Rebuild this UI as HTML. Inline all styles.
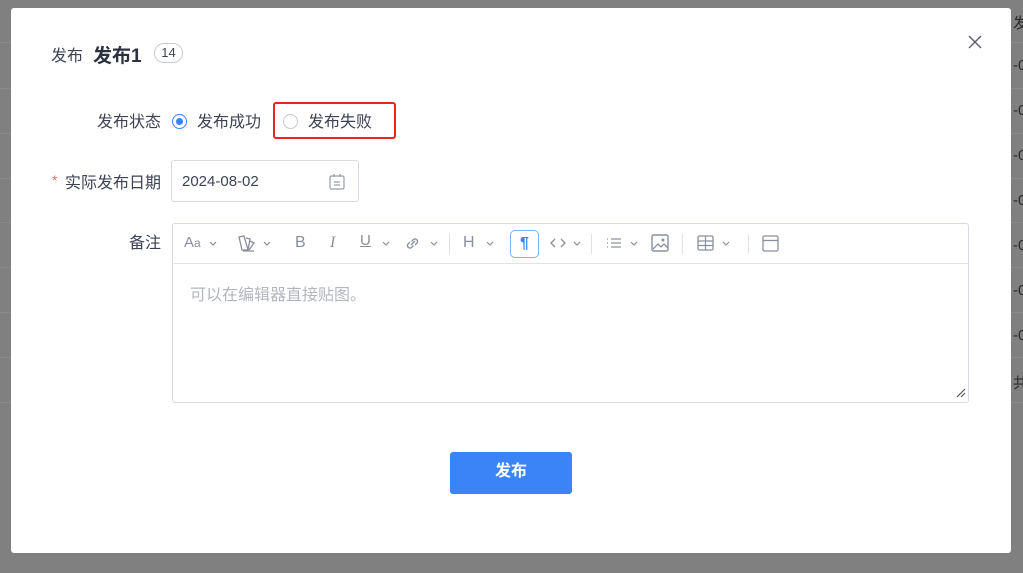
<!DOCTYPE html>
<html><head><meta charset="utf-8"><style>
*{margin:0;padding:0;box-sizing:border-box}
body{width:1023px;height:573px;overflow:hidden;background:#808080;font-family:"Liberation Sans","Noto Sans CJK SC",sans-serif;position:relative;color:#333}
.row{position:absolute;left:0;right:0;height:1px;background:#8a8a8a}
.rt{position:absolute;left:1013px;font-size:15px;color:#2a2a2a;white-space:nowrap}
.modal{position:absolute;left:11px;top:8px;width:1000px;height:545px;background:#fff;border-radius:3px}
.abs{position:absolute;white-space:nowrap}
.lbl{font-size:16px;color:#3d4353}
svg{display:block}
</style></head><body>
<div class="row" style="top:42px"></div><div class="row" style="top:88px"></div><div class="row" style="top:133px"></div><div class="row" style="top:178px"></div><div class="row" style="top:222px"></div><div class="row" style="top:267px"></div><div class="row" style="top:312px"></div><div class="row" style="top:357px"></div><div class="row" style="top:402px"></div>
<div class="rt" style="top:12px">发布</div>
<div class="rt" style="top:57px">-0</div><div class="rt" style="top:102px">-0</div><div class="rt" style="top:147px">-0</div><div class="rt" style="top:192px">-0</div><div class="rt" style="top:237px">-0</div><div class="rt" style="top:282px">-0</div><div class="rt" style="top:327px">-0</div><div class="rt" style="top:372px">共</div>
<div class="modal">
 <div class="abs" style="left:40px;top:34px;font-size:16px;color:#3d4353">发布</div>
 <div class="abs" style="left:82px;top:33px;font-size:19px;font-weight:bold;color:#2d3240">发布1</div>
 <div class="abs" style="left:143px;top:35px;width:29px;height:20px;border:1px solid #c8cbd6;border-radius:10px;font-size:13px;text-align:center;line-height:18px;color:#3d4353">14</div>
 <svg class="abs" style="left:957px;top:27px" width="14" height="14"><path d="M1 1L13 13M13 1L1 13" stroke="#555b66" stroke-width="1.3"/></svg>

 <div class="abs lbl" style="left:86px;top:100px">发布状态</div>
 <div class="abs" style="left:161px;top:106px;width:15px;height:15px;border-radius:50%;border:1px solid #3a84f7;"><div style="margin:3px;width:7px;height:7px;border-radius:50%;background:#3a84f7"></div></div>
 <div class="abs lbl" style="left:186px;top:100px">发布成功</div>
 <div class="abs" style="left:262px;top:94px;width:123px;height:37px;border:2px solid #e3281f;border-radius:3px"></div>
 <div class="abs" style="left:272px;top:106px;width:15px;height:15px;border-radius:50%;border:1px solid #c4c7cf"></div>
 <div class="abs lbl" style="left:297px;top:100px">发布失败</div>

 <div class="abs" style="left:41px;top:164px;color:#f56c6c;font-size:14px">*</div>
 <div class="abs lbl" style="left:54px;top:161px">实际发布日期</div>
 <div class="abs" style="left:160px;top:152px;width:188px;height:42px;border:1px solid #d6d9e0;border-radius:3px"></div>
 <div class="abs" style="left:171px;top:165px;font-size:15px;color:#3d4353">2024-08-02</div>
 <svg class="abs" style="left:318px;top:165px" width="16" height="17"><rect x="1" y="3" width="14" height="13" rx="1.5" fill="none" stroke="#999da8" stroke-width="1.2"/><path d="M5 1v3M11 1v3M5 9h6M5 12h6" stroke="#999da8" stroke-width="1.2"/></svg>

 <div class="abs lbl" style="left:118px;top:221px">备注</div>
 <div class="abs" style="left:161px;top:215px;width:797px;height:180px;border:1px solid #d6d9e6;border-radius:3px">
  <div style="height:40px;border-bottom:1px solid #dfe2e8;position:relative;color:#8a8f9c">
   <span class="abs" style="left:11px;top:10px;font-size:15px">A<span style="font-size:12px">a</span></span>
   <svg class="abs" style="left:36px;top:17px" width="8" height="6"><path d="M1 1l3 3 3-3" stroke="#8a8f9c" fill="none" stroke-width="1.2"/></svg>
   <svg class="abs" style="left:64px;top:10px" width="20" height="20"><path d="M2 3l5-1 4 14H5z M9 4l4 1-2 11 M13 7l4 2-5 7 M6 17h11" stroke="#8a8f9c" fill="none" stroke-width="1.3"/></svg>
   <svg class="abs" style="left:90px;top:17px" width="8" height="6"><path d="M1 1l3 3 3-3" stroke="#8a8f9c" fill="none" stroke-width="1.2"/></svg>
   <span class="abs" style="left:122px;top:10px;font-size:16px">B</span>
   <span class="abs" style="left:157px;top:10px;font-size:16px;font-family:'Liberation Serif',serif;font-style:italic">I</span>
   <span class="abs" style="left:187px;top:8px;font-size:15px;text-decoration:underline">U</span>
   <svg class="abs" style="left:209px;top:17px" width="8" height="6"><path d="M1 1l3 3 3-3" stroke="#8a8f9c" fill="none" stroke-width="1.2"/></svg>
   <svg class="abs" style="left:231px;top:11px" width="17" height="17"><path d="M7 10l4-4M6 7L4 9a2.5 2.5 0 003.5 3.5L9.5 10.5M11 10l2-2A2.5 2.5 0 009.5 4.5L7.5 6.5" stroke="#8a8f9c" fill="none" stroke-width="1.3"/></svg>
   <svg class="abs" style="left:257px;top:17px" width="8" height="6"><path d="M1 1l3 3 3-3" stroke="#8a8f9c" fill="none" stroke-width="1.2"/></svg>
   <div class="abs" style="left:276px;top:10px;width:1px;height:20px;background:#dfe2e8"></div>
   <span class="abs" style="left:290px;top:10px;font-size:16px">H</span>
   <svg class="abs" style="left:313px;top:17px" width="8" height="6"><path d="M1 1l3 3 3-3" stroke="#8a8f9c" fill="none" stroke-width="1.2"/></svg>
   <div class="abs" style="left:337px;top:6px;width:29px;height:28px;border:1px solid #7fb0fb;border-radius:5px;color:#3a84f7;font-size:16px;text-align:center;line-height:25px;font-weight:bold">¶</div>
   <svg class="abs" style="left:376px;top:13px" width="18" height="12"><path d="M6 2L2 6l4 4M12 2l4 4-4 4" stroke="#8a8f9c" fill="none" stroke-width="1.3"/></svg>
   <svg class="abs" style="left:400px;top:17px" width="8" height="6"><path d="M1 1l3 3 3-3" stroke="#8a8f9c" fill="none" stroke-width="1.2"/></svg>
   <div class="abs" style="left:418px;top:10px;width:1px;height:20px;background:#dfe2e8"></div>
   <svg class="abs" style="left:433px;top:13px" width="16" height="13"><path d="M1 2h1M1 6h1M1 10h1M5 2h10M5 6h10M5 10h10" stroke="#8a8f9c" stroke-width="1.3"/></svg>
   <svg class="abs" style="left:457px;top:17px" width="8" height="6"><path d="M1 1l3 3 3-3" stroke="#8a8f9c" fill="none" stroke-width="1.2"/></svg>
   <svg class="abs" style="left:478px;top:10px" width="18" height="18"><rect x="1" y="1" width="16" height="16" rx="1.5" fill="none" stroke="#8a8f9c" stroke-width="1.4"/><path d="M2 15l5-5 3 3 3-3 4 4" stroke="#8a8f9c" fill="none" stroke-width="1.3"/><circle cx="12" cy="6" r="1.5" fill="#8a8f9c"/></svg>
   <div class="abs" style="left:509px;top:10px;width:1px;height:20px;background:#dfe2e8"></div>
   <svg class="abs" style="left:524px;top:11px" width="17" height="16"><rect x="1" y="1" width="15" height="14" rx="1.5" fill="none" stroke="#8a8f9c" stroke-width="1.3"/><path d="M1 6h15M1 10.5h15M8.5 1v14" stroke="#8a8f9c" stroke-width="1.2"/></svg>
   <svg class="abs" style="left:549px;top:17px" width="8" height="6"><path d="M1 1l3 3 3-3" stroke="#8a8f9c" fill="none" stroke-width="1.2"/></svg>
   <div class="abs" style="left:575px;top:10px;width:1px;height:20px;background:#dfe2e8"></div>
   <svg class="abs" style="left:589px;top:11px" width="17" height="17"><rect x="1" y="1" width="15" height="15" rx="1.5" fill="none" stroke="#8a8f9c" stroke-width="1.3"/><path d="M1 5.5h15" stroke="#8a8f9c" stroke-width="1.3"/></svg>
  </div>
  <div class="abs" style="left:17px;top:57px;font-size:16px;color:#b3b6bd">可以在编辑器直接贴图。</div>
  <svg class="abs" style="left:783px;top:164px" width="10" height="10"><path d="M1 9L9 1M5 9L9 5" stroke="#555" stroke-width="1.2"/></svg>
 </div>

 <div class="abs" style="left:439px;top:444px;width:122px;height:42px;background:#3a84f7;border-radius:3px;color:#fff;font-size:16px;font-weight:bold;text-align:center;line-height:40px">发布</div>
</div>
</body></html>
